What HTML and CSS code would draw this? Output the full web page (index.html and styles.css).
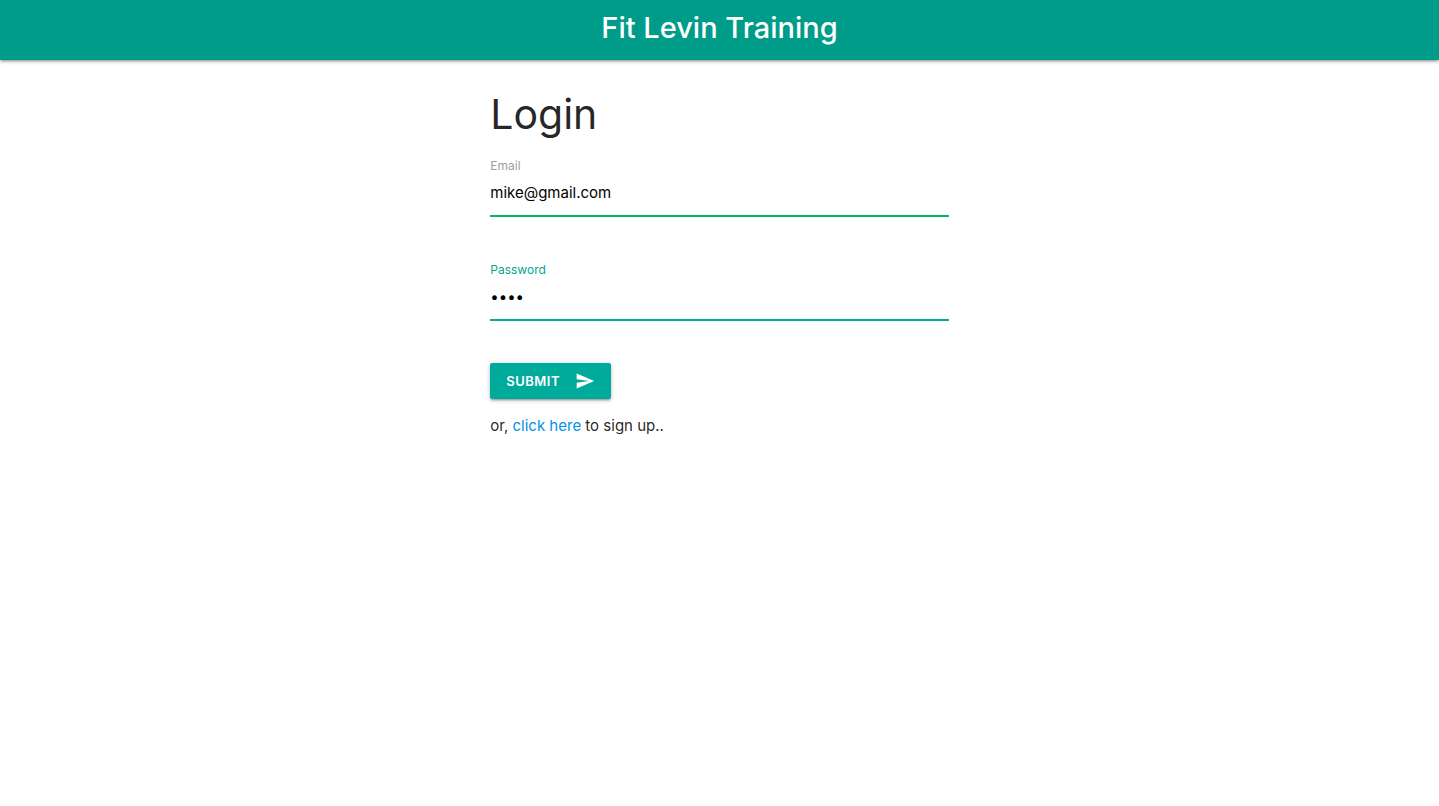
FILE: index.html
```html
<!DOCTYPE html>
<html lang="en">
<head>
<meta charset="utf-8">
<meta name="viewport" content="width=device-width, initial-scale=1">
<title>Fit Levin Training</title>
<link rel="stylesheet" href="styles.css">
</head>
<body>
<header class="navbar"><span class="brand">Fit Levin Training</span></header>
<main class="container">
  <h1 class="title">Login</h1>
  <form class="form">
    <div class="field">
      <label class="label" for="email">Email</label>
      <input class="input input-valid" id="email" type="email" value="mike@gmail.com">
    </div>
    <div class="field">
      <label class="label label-active" for="password">Password</label>
      <input class="input input-active" id="password" type="password" value="mike">
    </div>
    <button class="button" type="submit">Submit
      <svg class="icon" viewBox="0 0 24 24" aria-hidden="true"><path d="M2.01 21L23 12 2.01 3 2 10l15 2-15 2z"/></svg>
    </button>
  </form>
  <p class="note">or, <a class="link" href="#">click here</a> to sign up..</p>
</main>
</body>
</html>
```
FILE: styles.css
```css
* { box-sizing: border-box; }
body {
  margin: 0;
  background: #fff;
  color: rgba(0, 0, 0, 0.87);
  font-family: Inter, "Liberation Sans", sans-serif;
  font-size: 15px;
  line-height: 22px;
}
.navbar {
  display: flex;
  justify-content: center;
  height: 60px;
  background: #009c8a;
  box-shadow: 0 2px 2px 0 rgba(0, 0, 0, 0.14), 0 3px 1px -2px rgba(0, 0, 0, 0.12), 0 1px 5px 0 rgba(0, 0, 0, 0.2);
}
.brand {
  color: #fff;
  font-size: 29px;
  font-weight: 500;
  line-height: 56px;
}
.container {
  width: calc(32% - 2px);
  min-width: 280px;
  margin: 0 auto;
  padding-top: 30px;
}
.title {
  margin: 0 0 17px;
  font-size: 41px;
  line-height: 48px;
  font-weight: 400;
}
.field {
  display: flex;
  flex-direction: column;
  margin-bottom: 42px;
}
.label {
  color: #9e9e9e;
  font-size: 12px;
  line-height: 22px;
}
.label-active { color: #00a693; }
.input {
  width: 100%;
  height: 40px;
  padding: 0 0 8px;
  border: 0;
  border-bottom: 2px solid;
  outline: 0;
  background: transparent;
  color: #000;
  font-family: inherit;
  font-size: 15px;
}
.input-valid { border-color: #00b857; }
.input-active { border-color: #00ab9c; }
.button {
  display: inline-flex;
  align-items: center;
  gap: 15px;
  height: 36px;
  padding: 0 16px;
  border: 0;
  border-radius: 2px;
  background: #00ab9c;
  color: #fff;
  font-family: inherit;
  font-size: 13px;
  font-weight: 600;
  letter-spacing: 0.5px;
  text-transform: uppercase;
  box-shadow: 0 2px 2px 0 rgba(0, 0, 0, 0.14), 0 3px 1px -2px rgba(0, 0, 0, 0.12), 0 1px 5px 0 rgba(0, 0, 0, 0.2);
  cursor: pointer;
}
.icon {
  width: 20px;
  height: 20px;
  fill: currentColor;
}
.note { margin: 16px 0 0; }
.link {
  color: #0091ea;
  text-decoration: none;
}
```
